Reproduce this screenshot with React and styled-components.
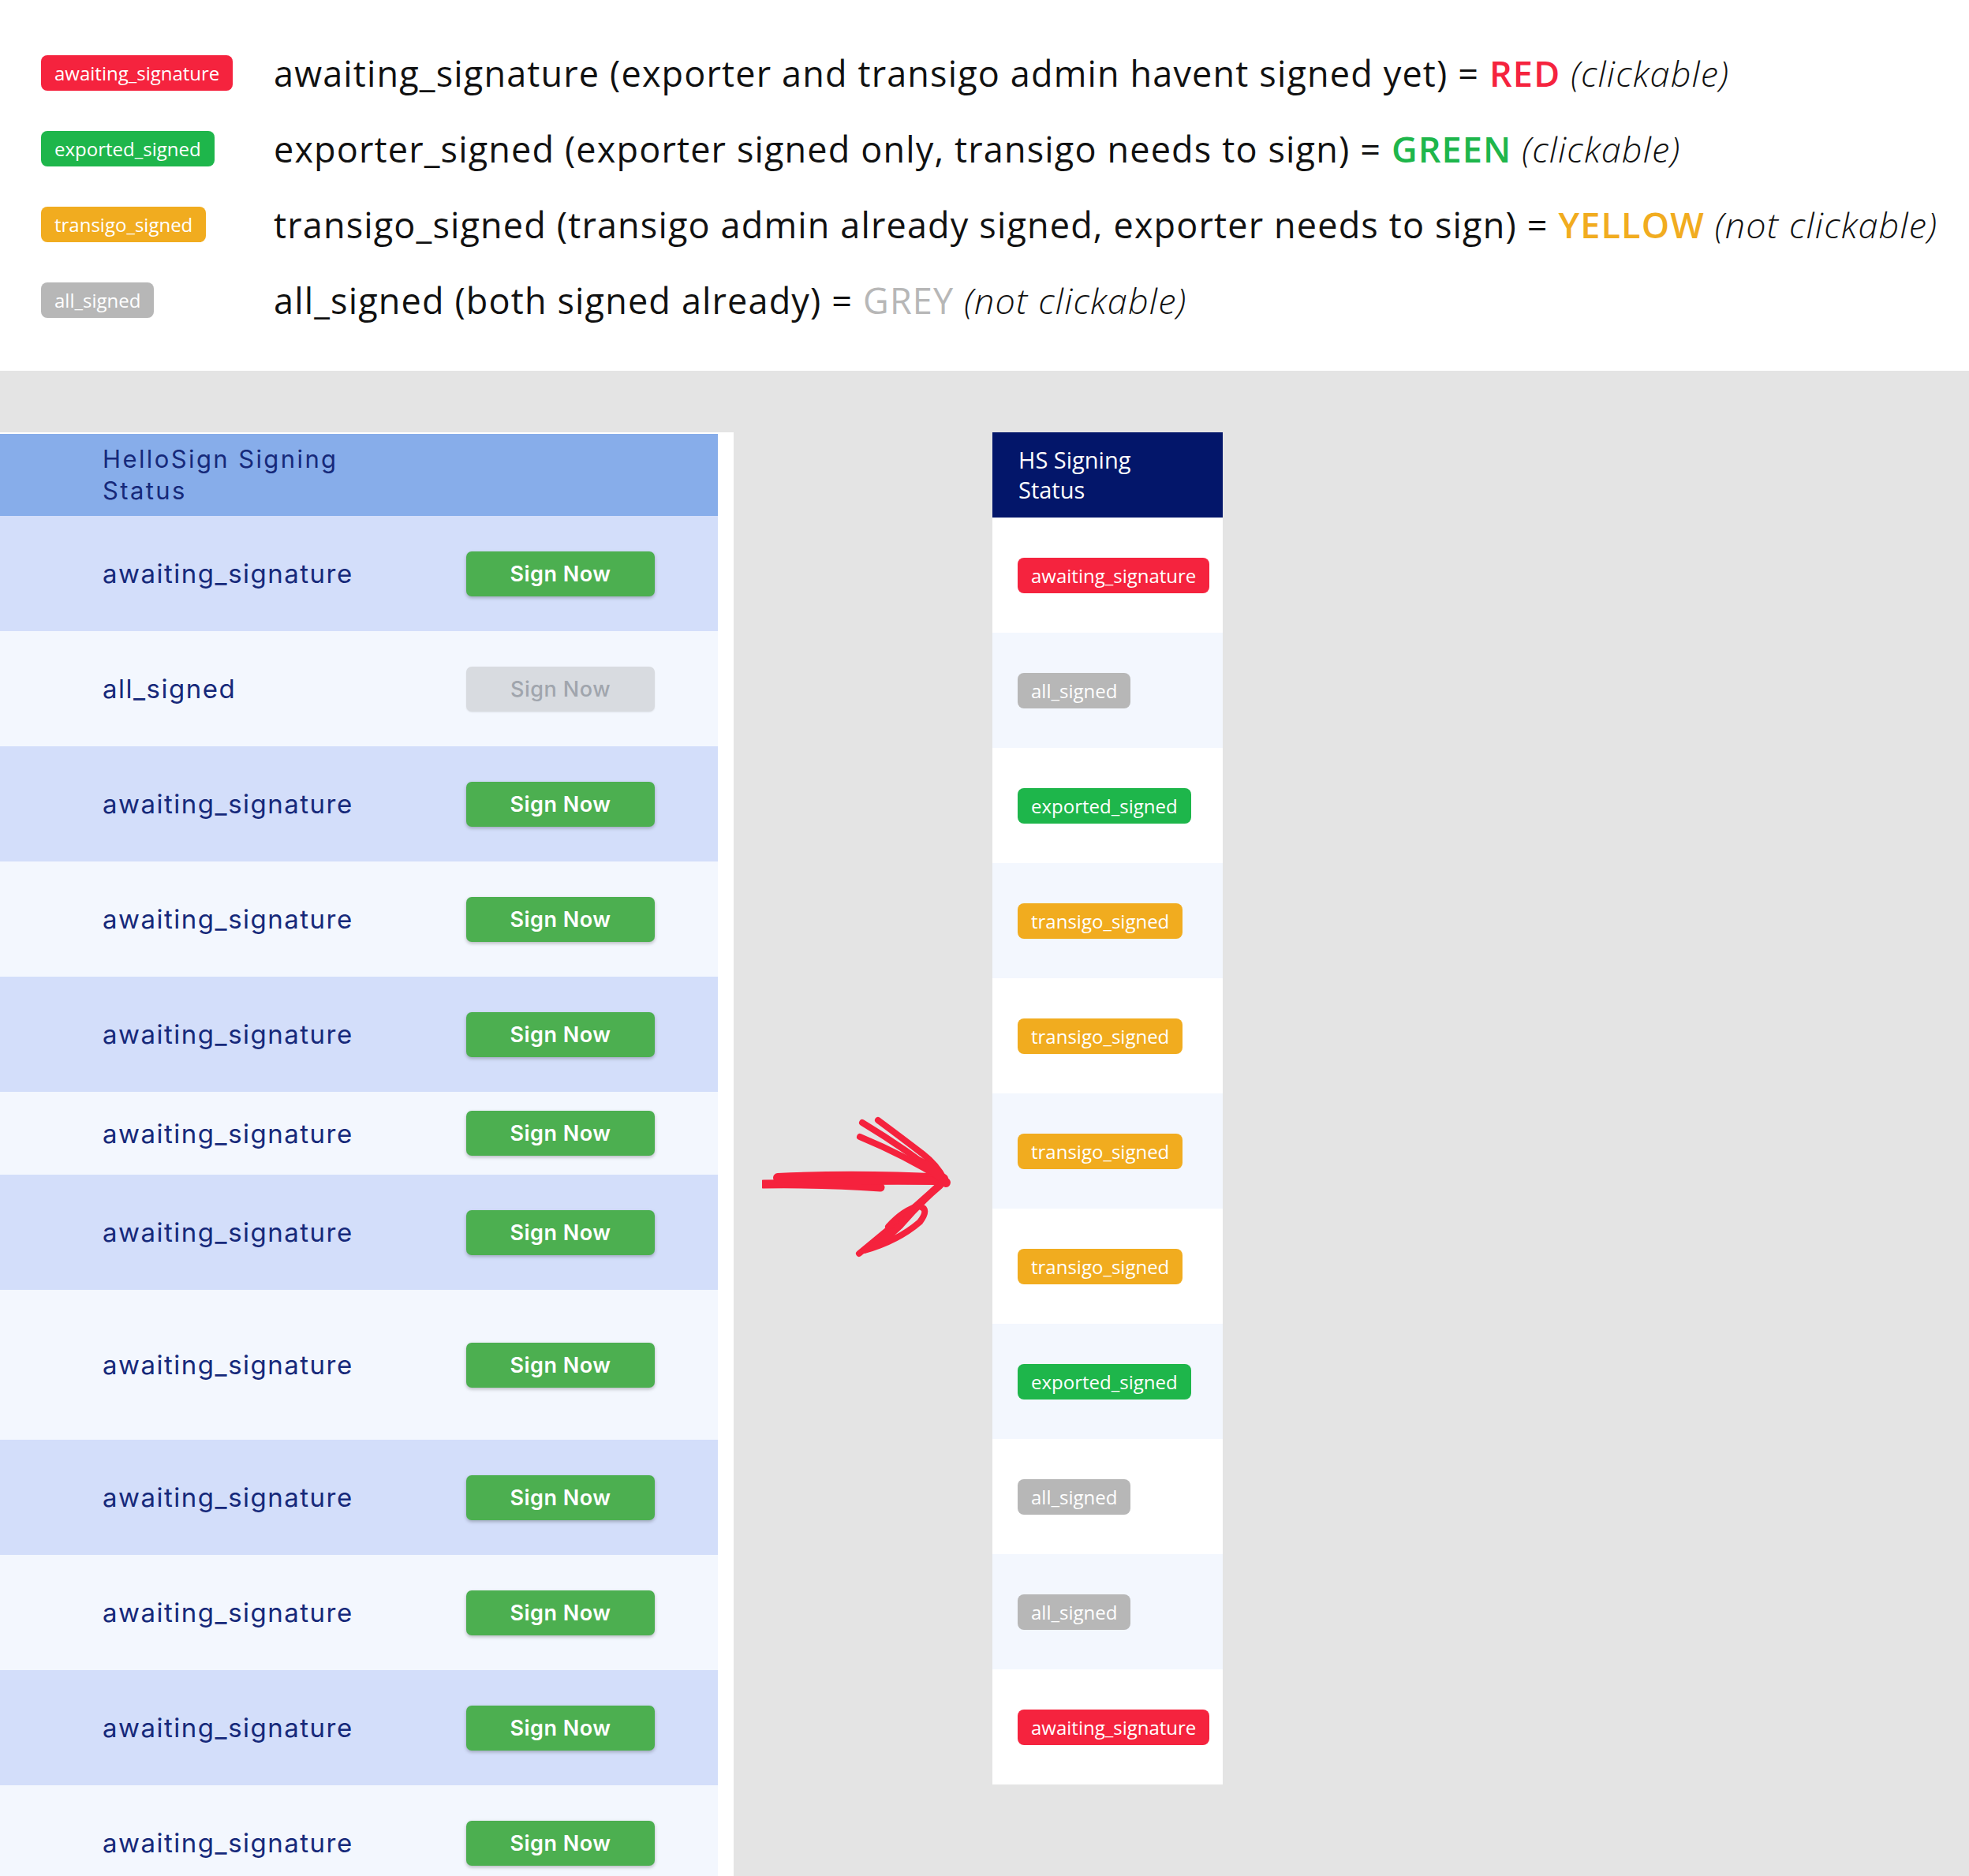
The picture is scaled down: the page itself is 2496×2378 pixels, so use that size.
import React from "react";
import styled, { createGlobalStyle } from "styled-components";

const legend = [
  {
    status: "awaiting",
    label: "awaiting_signature",
    text: "awaiting_signature (exporter and transigo admin havent signed yet) = ",
    word: "RED",
    note: "(clickable)",
  },
  {
    status: "exported",
    label: "exported_signed",
    text: "exporter_signed (exporter signed only, transigo needs to sign) = ",
    word: "GREEN",
    note: "(clickable)",
  },
  {
    status: "transigo",
    label: "transigo_signed",
    text: "transigo_signed (transigo admin already signed, exporter needs to sign) = ",
    word: "YELLOW",
    note: "(not clickable)",
  },
  {
    status: "all",
    label: "all_signed",
    text: "all_signed (both signed already) = ",
    word: "GREY",
    note: "(not clickable)",
  },
];

const leftRows = [
  { status: "awaiting_signature", h: 146 },
  { status: "all_signed", h: 146, disabled: true },
  { status: "awaiting_signature", h: 146 },
  { status: "awaiting_signature", h: 146 },
  { status: "awaiting_signature", h: 146 },
  { status: "awaiting_signature", h: 105 },
  { status: "awaiting_signature", h: 146 },
  { status: "awaiting_signature", h: 190 },
  { status: "awaiting_signature", h: 146 },
  { status: "awaiting_signature", h: 146 },
  { status: "awaiting_signature", h: 146 },
  { status: "awaiting_signature", h: 146 },
];

const rightRows = [
  ["awaiting", "awaiting_signature"],
  ["all", "all_signed"],
  ["exported", "exported_signed"],
  ["transigo", "transigo_signed"],
  ["transigo", "transigo_signed"],
  ["transigo", "transigo_signed"],
  ["transigo", "transigo_signed"],
  ["exported", "exported_signed"],
  ["all", "all_signed"],
  ["all", "all_signed"],
  ["awaiting", "awaiting_signature"],
];

const colors = {
  awaiting: "#f5233e",
  exported: "#1eb64b",
  transigo: "#f1ac1f",
  all: "#b7b7b7",
};

export default function App() {
  return (
    <Page>
      <GlobalStyle />
      <Legend>
        {legend.map((item) => (
          <React.Fragment key={item.status}>
            <Badge $status={item.status}>{item.label}</Badge>
            <LegendText>
              {item.text}
              <ColorWord $status={item.status}>{item.word}</ColorWord>{" "}
              <Note>{item.note}</Note>
            </LegendText>
          </React.Fragment>
        ))}
      </Legend>

      <Lower>
        <LeftPanel>
          <HelloHeader>
            <span>HelloSign Signing Status</span>
          </HelloHeader>
          {leftRows.map((row, i) => (
            <HelloRow key={i} $dark={i % 2 === 0} $h={row.h}>
              <StatusText>{row.status}</StatusText>
              <SignButton $disabled={row.disabled}>Sign Now</SignButton>
            </HelloRow>
          ))}
        </LeftPanel>

        <ArrowCol>
          <svg width="240" height="186" viewBox="0 0 240 186" fill="none">
            <g stroke="#f5223d" strokeLinecap="round" strokeLinejoin="round">
              <path d="M2 88 Q80 87 150 92" strokeWidth="11" />
              <path d="M20 80 Q120 75 230 81" strokeWidth="12" />
              <path d="M60 85 Q150 83 222 84" strokeWidth="10" />
              <path d="M127 10 Q185 45 231 82" strokeWidth="8" />
              <path d="M147 7 Q178 30 204 50 Q222 64 231 82" strokeWidth="8" />
              <path d="M124 28 Q182 52 231 83" strokeWidth="8" />
              <path d="M200 60 Q220 70 233 86" strokeWidth="12" />
              <path d="M231 83 Q180 130 123 176" strokeWidth="8" />
              <path d="M226 90 Q200 112 176 140 Q150 165 130 172 Q172 160 200 136 Q213 119 199 116 Q180 120 160 142" strokeWidth="8" />
            </g>
          </svg>
        </ArrowCol>

        <HsTable>
          <HsHeader>
            <span>HS Signing</span>
            <span>Status</span>
          </HsHeader>
          {rightRows.map(([status, label], i) => (
            <HsRow key={i} $light={i % 2 === 1}>
              <Badge $status={status}>{label}</Badge>
            </HsRow>
          ))}
        </HsTable>
      </Lower>
    </Page>
  );
}

const GlobalStyle = createGlobalStyle`
  html, body {
    margin: 0;
    padding: 0;
  }
  body {
    background: #e4e4e4;
    overflow: hidden;
  }
`;

const Page = styled.div`
  width: 2496px;
  height: 2378px;
  overflow: hidden;
  display: flex;
  flex-direction: column;
  background: #e4e4e4;
`;

const Legend = styled.div`
  height: 470px;
  flex-shrink: 0;
  box-sizing: border-box;
  background: #fff;
  padding: 44px 0 0 52px;
  display: grid;
  grid-template-columns: 295px auto;
  grid-auto-rows: 96px;
  align-items: center;
  justify-items: start;
`;

const Badge = styled.span`
  display: inline-flex;
  align-items: center;
  height: 45px;
  padding: 0 17px;
  border-radius: 8px;
  background: ${(p) => colors[p.$status]};
  color: #fff;
  font-family: "Open Sans", "Noto Sans", sans-serif;
  font-size: 24px;
  white-space: nowrap;
`;

const LegendText = styled.div`
  font-family: "Open Sans", "Noto Sans", sans-serif;
  font-size: 45px;
  letter-spacing: 1.15px;
  color: #111;
  white-space: nowrap;
`;

const ColorWord = styled.span`
  color: ${(p) => colors[p.$status]};
  font-weight: ${(p) => (p.$status === "all" ? 400 : 600)};
`;

const Note = styled.span`
  font-style: italic;
  font-weight: 300;
`;

const Lower = styled.div`
  flex: 1;
  display: flex;
  align-items: flex-start;
  padding-top: 78px;
  overflow: hidden;
`;

const LeftPanel = styled.div`
  width: 930px;
  align-self: stretch;
  box-sizing: border-box;
  padding: 2px 20px 0 0;
  background: #fff;
  flex-shrink: 0;
`;

const HelloHeader = styled.div`
  height: 104px;
  background: #87adea;
  display: flex;
  align-items: center;
  padding-left: 130px;
  span {
    width: 330px;
    font-family: Inter, "Noto Sans", sans-serif;
    font-size: 31px;
    letter-spacing: 2.4px;
    line-height: 40px;
    color: #16297a;
  }
`;

const HelloRow = styled.div`
  height: ${(p) => p.$h}px;
  background: ${(p) => (p.$dark ? "#d3defa" : "#f3f7fe")};
  display: grid;
  grid-template-columns: 461px 239px;
  align-items: center;
  padding-left: 130px;
`;

const StatusText = styled.span`
  font-family: Inter, "Noto Sans", sans-serif;
  font-size: 33px;
  letter-spacing: 1.5px;
  color: #16297a;
`;

const SignButton = styled.button`
  height: 57px;
  border: none;
  border-radius: 7px;
  background: ${(p) => (p.$disabled ? "#d8dbe0" : "#4caf50")};
  color: ${(p) => (p.$disabled ? "#a0a5ad" : "#fff")};
  font-family: Inter, "Noto Sans", sans-serif;
  font-size: 27px;
  letter-spacing: 0.5px;
  font-weight: ${(p) => (p.$disabled ? 500 : 600)};
  box-shadow: ${(p) =>
    p.$disabled ? "0 1px 2px rgba(0,0,0,0.08)" : "0 2px 4px rgba(0,0,0,0.25)"};
  cursor: ${(p) => (p.$disabled ? "default" : "pointer")};
`;

const ArrowCol = styled.div`
  width: 328px;
  flex-shrink: 0;
  box-sizing: border-box;
  padding: 865px 0 0 36px;
  display: flex;
`;

const HsTable = styled.div`
  width: 292px;
  flex-shrink: 0;
  background: #fff;
`;

const HsHeader = styled.div`
  height: 108px;
  box-sizing: border-box;
  background: #03166a;
  padding-left: 33px;
  display: flex;
  flex-direction: column;
  justify-content: center;
  color: #fff;
  font-family: "Open Sans", "Noto Sans", sans-serif;
  font-size: 29px;
  line-height: 38px;
`;

const HsRow = styled.div`
  height: 146px;
  background: ${(p) => (p.$light ? "#f3f7fe" : "#fff")};
  display: flex;
  align-items: center;
  padding-left: 32px;
`;
